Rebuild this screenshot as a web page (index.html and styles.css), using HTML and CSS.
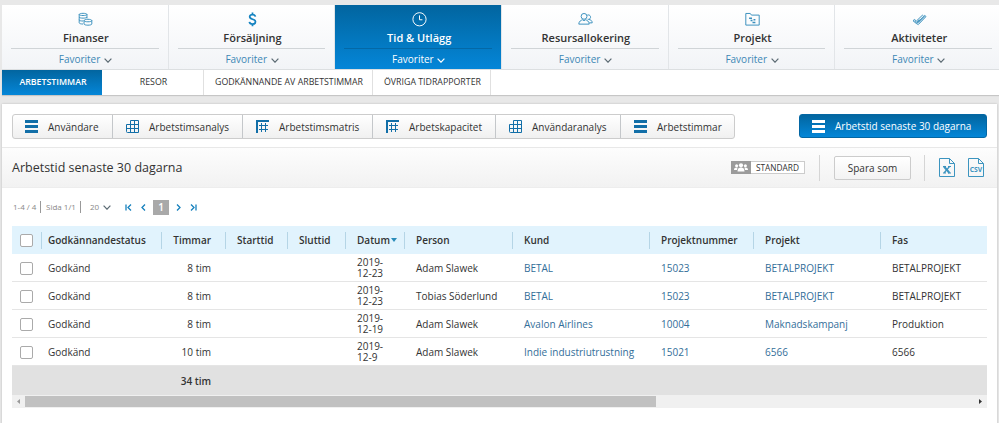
FILE: index.html
```html
<!DOCTYPE html>
<html lang="sv">
<head>
  <meta charset="UTF-8" />
  <meta name="viewport" content="width=device-width, initial-scale=1.0"/>
  <title>Arbetstid senaste 30 dagarna</title>
  <link rel="stylesheet" href="styles.css">
</head>
<body>
  <!-- shared icons -->
  <svg class="sprite" width="0" height="0">
    <symbol id="i-rows" viewBox="0 0 13 13"><path fill="currentColor" d="M0 0h13v3H0zM0 5h13v3H0zM0 10h13v3H0z"/></symbol>
    <symbol id="i-cube" viewBox="0 0 13 13"><path fill="none" stroke="currentColor" d="M4.5 .5h8v12H1.5a1 1 0 0 1-1-1V4.5h12M.5 8.5h12M4.500 .5v12M8.500 .5v12"/></symbol>
    <symbol id="i-matrix" viewBox="0 0 13 13"><path fill="none" stroke="currentColor" stroke-width="2" d="M13 1H1v12"/><path fill="none" stroke="currentColor" d="M5.500 3v9M9.500 3v9M3 5.500h9M3 9.500h9"/></symbol>
    <symbol id="i-down" viewBox="0 0 8 5"><path fill="none" stroke="currentColor" stroke-width="1.200" d="M.6 .6L4 4.200 7.400 .6"/></symbol>
  </svg>

  <nav class="main-nav">
    <a class="module">
      <svg class="module-icon" viewBox="0 0 15 15"><path d="M1 2.500C1 1 9 1 9 2.500S1 4 1 2.500v8.500c0 1 2 1.400 4 1.400M9 2.500v4M1 5.200c0 1.500 8 1.500 8 0M1 8c0 1 2 1.300 4 1.300M6 8.800c0-1.700 8-1.700 8 0s-8 1.700-8 0v3.500c0 1.700 8 1.700 8 0V8.800"/></svg>
      <span class="module-name">Finanser</span>
      <span class="favorites">Favoriter <svg class="down"><use href="#i-down"/></svg></span>
    </a>
    <a class="module">
      <svg class="module-icon dollar" viewBox="0 0 15 15"><path d="M10.500 4.800C10.300 3.400 9.200 2.700 7.500 2.700 5.700 2.700 4.600 3.500 4.600 4.900c0 3.200 6 1.900 6 5.100 0 1.500-1.200 2.400-3.100 2.400-1.800 0-3-.8-3.200-2.300M7.500 .6v2M7.500 12.400v2.200"/></svg>
      <span class="module-name">Försäljning</span>
      <span class="favorites">Favoriter <svg class="down"><use href="#i-down"/></svg></span>
    </a>
    <a class="module active">
      <svg class="module-icon" viewBox="0 0 15 15"><circle cx="7.500" cy="7.500" r="6.800"/><path d="M7.500 3.500v4.500h3"/></svg>
      <span class="module-name">Tid &amp; Utlägg</span>
      <span class="favorites">Favoriter <svg class="down"><use href="#i-down"/></svg></span>
    </a>
    <a class="module">
      <svg class="module-icon" viewBox="0 0 15 15"><circle cx="6" cy="4.500" r="3"/><path d="M.6 12.500C.6 9.500 3 8.500 4.500 8L6 9l1.500-1c1.500.5 3.800 1.500 3.800 4.500zM9.300 3.300a2.300 2.300 0 1 1 1 4.300l-.6-.2M11 7.700c2 .3 3.400 1.300 3.400 3.500h-3"/></svg>
      <span class="module-name">Resursallokering</span>
      <span class="favorites">Favoriter <svg class="down"><use href="#i-down"/></svg></span>
    </a>
    <a class="module">
      <svg class="module-icon" viewBox="0 0 15 15"><path d="M.6 13.500v-12h4.600l1.200 1.700h8v10.300z"/><path stroke-width="1.500" d="M4 6.500h3M5.500 8.700h2M7.500 10.800h3M8.500 8h2"/></svg>
      <span class="module-name">Projekt</span>
      <span class="favorites">Favoriter <svg class="down"><use href="#i-down"/></svg></span>
    </a>
    <a class="module">
      <svg class="module-icon" viewBox="0 0 15 15"><path d="M.8 9l1.500-1.300 2 1.600 6.200-6 1.200 1.100-7.300 7.600zM4.600 11.800l1.600 1.200 8-8.300-1.200-1.100-1.300.8M2.300 9.200l2 1.600 3-3M6.200 11.300L13 4.600"/></svg>
      <span class="module-name">Aktiviteter</span>
      <span class="favorites">Favoriter <svg class="down"><use href="#i-down"/></svg></span>
    </a>
  </nav>

  <div class="sub-nav">
    <a class="tab active">ARBETSTIMMAR</a>
    <a class="tab resor">RESOR</a>
    <a class="tab approve">GODKÄNNANDE AV ARBETSTIMMAR</a>
    <a class="tab other">ÖVRIGA TIDRAPPORTER</a>
  </div>

  <main class="panel">
    <div class="toolbar">
      <div class="views">
        <button class="view w100"><svg class="icon"><use href="#i-rows"/></svg><span>Användare</span></button>
        <button class="view w130"><svg class="icon"><use href="#i-cube"/></svg><span>Arbetstimsanalys</span></button>
        <button class="view w130"><svg class="icon"><use href="#i-matrix"/></svg><span>Arbetstimsmatris</span></button>
        <button class="view w123"><svg class="icon"><use href="#i-matrix"/></svg><span>Arbetskapacitet</span></button>
        <button class="view w125"><svg class="icon"><use href="#i-cube"/></svg><span>Användaranalys</span></button>
        <button class="view w114"><svg class="icon"><use href="#i-rows"/></svg><span>Arbetstimmar</span></button>
      </div>
      <button class="primary"><svg class="icon"><use href="#i-rows"/></svg><span>Arbetstid senaste 30 dagarna</span></button>
    </div>

    <div class="title-bar">
      <h1>Arbetstid senaste 30 dagarna</h1>
      <div class="badge">
        <span class="badge-icon"><svg width="14" height="9" viewBox="0 0 14 9"><g fill="#fff"><circle cx="7" cy="2.300" r="2.100"/><circle cx="2.600" cy="2.700" r="1.500"/><circle cx="11.400" cy="2.700" r="1.500"/><path d="M3.500 8.500C3.500 5.500 5 4.600 7 4.600s3.500.9 3.500 3.900zM0 7C0 5 1 4.300 3.600 4.500L2.900 7zM14 7c0-2-1-2.700-3.600-2.500l.7 2.500z"/></g></svg></span>
        <span class="badge-text">STANDARD</span>
      </div>
      <div class="save-wrap"><button class="save">Spara som</button></div>
      <svg class="file" viewBox="0 0 16 19"><path d="M.5 .5h10l5 5v13H.5zM10.500 .5v5h5"/><path stroke-width="2" d="M5 8.500l5.500 6.500"/><path stroke-width="1.200" d="M10.500 8.500L5 15M4 8.500h3M9 8.500h3M4 15h3M9 15h3"/></svg>
      <svg class="file" viewBox="0 0 16 19"><path d="M.5 18.500V.5h10l5 5v13M10.500 .5v5h5M.5 18.500h15"/><text x="8" y="13.900" textLength="12.500" lengthAdjust="spacingAndGlyphs">CSV</text></svg>
    </div>

    <div class="pager">
      <span class="count">1-4 / 4</span>
      <span class="page">Sida 1/1</span>
      <span class="size">20 <svg class="down"><use href="#i-down"/></svg></span>
      <svg class="arrow first" viewBox="0 0 7 7"><path d="M1 .5v6M6 .5l-3 3 3 3"/></svg>
      <svg class="arrow prev" viewBox="0 0 7 7"><path d="M5 .5l-3 3 3 3"/></svg>
      <span class="current">1</span>
      <svg class="arrow next" viewBox="0 0 7 7"><path d="M2 .5l3 3-3 3"/></svg>
      <svg class="arrow" viewBox="0 0 7 7"><path d="M1 .5l3 3-3 3M6 .5v6"/></svg>
    </div>

    <table class="grid">
      <colgroup>
        <col class="c-check"><col class="c-status"><col class="c-hours"><col class="c-start"><col class="c-end">
        <col class="c-date"><col class="c-person"><col class="c-client"><col class="c-number"><col class="c-project"><col>
      </colgroup>
      <thead>
        <tr>
          <th><i class="check"></i></th>
          <th class="status">Godkännandestatus</th>
          <th class="hours">Timmar</th>
          <th>Starttid</th>
          <th>Sluttid</th>
          <th class="date"><span class="sort">Datum</span></th>
          <th>Person</th>
          <th>Kund</th>
          <th>Projektnummer</th>
          <th>Projekt</th>
          <th>Fas</th>
        </tr>
      </thead>
      <tbody>
        <tr>
          <td><i class="check"></i></td><td class="status">Godkänd</td><td class="hours">8 tim</td><td></td><td></td>
          <td class="date">2019-<br>12-23</td><td>Adam Slawek</td><td><a>BETAL</a></td><td><a>15023</a></td><td><a>BETALPROJEKT</a></td><td>BETALPROJEKT</td>
        </tr>
        <tr>
          <td><i class="check"></i></td><td class="status">Godkänd</td><td class="hours">8 tim</td><td></td><td></td>
          <td class="date">2019-<br>12-23</td><td>Tobias Söderlund</td><td><a>BETAL</a></td><td><a>15023</a></td><td><a>BETALPROJEKT</a></td><td>BETALPROJEKT</td>
        </tr>
        <tr>
          <td><i class="check"></i></td><td class="status">Godkänd</td><td class="hours">8 tim</td><td></td><td></td>
          <td class="date">2019-<br>12-19</td><td>Adam Slawek</td><td><a>Avalon Airlines</a></td><td><a>10004</a></td><td><a>Maknadskampanj</a></td><td>Produktion</td>
        </tr>
        <tr>
          <td><i class="check"></i></td><td class="status">Godkänd</td><td class="hours">10 tim</td><td></td><td></td>
          <td class="date">2019-<br>12-9</td><td>Adam Slawek</td><td><a>Indie industriutrustning</a></td><td><a>15021</a></td><td><a>6566</a></td><td>6566</td>
        </tr>
      </tbody>
      <tfoot>
        <tr><td></td><td></td><td class="hours">34 tim</td><td colspan="8"></td></tr>
      </tfoot>
    </table>
    <div class="scrollbar">
      <svg class="scroll-btn" viewBox="0 0 13 13"><path fill="#999" d="M8 4v5L5 6.500z"/></svg>
      <div class="thumb"></div>
      <svg class="scroll-btn" viewBox="0 0 13 13"><path fill="#333" d="M5 4v5l3-2.500z"/></svg>
    </div>
  </main>
</body>
</html>
```
FILE: styles.css
```css
* {
  box-sizing: border-box;
}
body {
  font-family: 'Open Sans', sans-serif;
  font-size: 10px;
  background: #e8e8e8;
  color: #333;
  margin: 0;
  padding: 5px 0 0 2px;
  height: 423px;
  overflow: hidden;
}
.sprite {
  display: block;
  height: 0;
}
button {
  font: inherit;
  color: inherit;
  padding: 0;
}

/* main navigation */
.main-nav {
  display: flex;
  width: 1000px;
  height: 65px;
  border-bottom: 1px solid #dcdfe1;
}
.module {
  flex: 1;
  display: flex;
  flex-direction: column;
  align-items: center;
  padding: 7px 9px 0;
  background: linear-gradient(#fff, #f2f4f7);
  border-right: 1px solid #e2e5e8;
}
.module.active {
  background: linear-gradient(#02659f, #0486d8);
  color: #fff;
}
.module-icon {
  width: 15px;
  height: 15px;
  fill: none;
  stroke: #3a8fbd;
  stroke-width: 1;
}
.dollar {
  stroke: #1583c0;
  stroke-width: 1.8;
}
.active .module-icon {
  stroke: #fff;
}
.module-name {
  font-size: 11px;
  font-weight: 600;
  line-height: 16px;
  margin-top: 3px;
  height: 19px;
}
.module-icon, .module-name {
  margin-left: 2px;
}
.favorites {
  align-self: stretch;
  text-align: center;
  border-top: 1px solid #d0d4d7;
  color: #3c87b5;
  line-height: 20px;
  padding-left: 1px;
}
.active .favorites {
  color: #fff;
  border-color: #0468a6;
}
.down {
  width: 8px;
  height: 5px;
  margin-left: 1px;
  color: #5b6a73;
}
.active .down {
  color: #fff;
}

/* tabs under the active module */
.sub-nav {
  display: flex;
  width: 1000px;
  height: 25px;
  background: #fff;
  box-shadow: 0 1px 1px #c6c6c6;
  font-size: 8.800px;
}
.tab {
  border-right: 1px solid #e0e0e0;
  text-align: center;
  line-height: 24px;
  width: 100px;
  padding-left: 2px;
}
.tab.active {
  background: linear-gradient(#02659f, #0486d8);
  color: #fff;
  font-weight: 600;
  border: 0;
}
.resor {
  width: 102px;
}
.approve {
  width: 169px;
}
.other {
  width: 118px;
}

/* page panel */
.panel {
  width: 995px;
  height: 330px;
  margin-top: 9px;
  background: #fff;
  box-shadow: 0 0 2px #bbb;
}
.toolbar {
  display: flex;
  justify-content: space-between;
  padding: 10px 10px 9px;
  height: 44px;
  border-bottom: 1px solid #e8e8e8;
}
.views {
  display: flex;
  height: 25px;
  border: 1px solid #ccc;
  border-radius: 3px;
  background: linear-gradient(#fff, #f0f0f0);
}
.view {
  display: flex;
  align-items: center;
  gap: 10px;
  padding-left: 13px;
  background: none;
  border: 0;
  border-left: 1px solid #c4c7ca;
  white-space: nowrap;
}
.view:first-child {
  border-left: 0;
  padding-left: 12px;
}
.w100 { width: 99px; }
.w130 { width: 130px; }
.w123 { width: 123px; }
.w125 { width: 125px; }
.w114 { width: 114px; }
.icon {
  width: 13px;
  height: 13px;
  color: #126fa8;
  flex: none;
}
.primary {
  display: flex;
  align-items: center;
  gap: 10px;
  width: 188px;
  height: 24px;
  padding-left: 12px;
  border: 1px solid #0467a4;
  border-radius: 3px;
  background: linear-gradient(#02659f, #0486d8);
  color: #fff;
  white-space: nowrap;
}
.primary .icon {
  color: #fff;
}

.title-bar {
  display: flex;
  align-items: center;
  height: 40px;
  padding: 0 13px 0 10px;
  background: linear-gradient(#fdfdfd, #f2f2f2);
  border-bottom: 1px solid #ededed;
}
h1 {
  font-size: 12.500px;
  font-weight: 400;
  margin: 0 auto 0 0;
}
.badge {
  display: flex;
  height: 13px;
  border: 1px solid #ccc;
  background: #fff;
  font-size: 8.300px;
  line-height: 12px;
}
.badge-icon {
  display: flex;
  align-items: center;
  justify-content: center;
  width: 20px;
  margin: -1px 0 -1px -1px;
  background: #9b9b9b;
}
.badge-text {
  width: 53px;
  text-align: center;
}
.save-wrap {
  padding: 1px 13px 1px 14px;
  margin: 0 14px;
  border-left: 1px solid #d5d5d5;
  border-right: 1px solid #d5d5d5;
}
.save {
  display: block;
  width: 77px;
  height: 24px;
  border: 1px solid #ccc;
  border-radius: 2px;
  background: linear-gradient(#fff, #f3f3f3);
}
.file {
  width: 16px;
  height: 19px;
  fill: none;
  stroke: #3c94bf;
}
.file + .file {
  margin-left: 13px;
}
.file text {
  font-size: 6.500px;
  font-weight: 700;
  text-anchor: middle;
  fill: #3c94bf;
  stroke: none;
}

.pager {
  display: flex;
  align-items: center;
  height: 38px;
  padding: 0 11px;
  font-size: 8px;
  line-height: 12px;
  color: #888;
}
.count, .page {
  border-right: 1px solid #999;
}
.count {
  width: 28px;
}
.page {
  width: 40px;
  padding-left: 5px;
}
.size {
  width: 44px;
  padding-left: 9px;
}
.size .down {
  margin-left: 2px;
}
.arrow {
  width: 7px;
  height: 7px;
  fill: none;
  stroke: #1781bd;
  stroke-width: 1.300;
}
.prev {
  margin: 0 6px 0 8px;
}
.current {
  width: 16px;
  height: 15px;
  background: #a9a9a9;
  color: #fff;
  font-size: 10px;
  font-weight: 600;
  line-height: 15px;
  text-align: center;
}
.next {
  margin: 0 8px 0 6px;
}

/* time entries */
.grid {
  width: 975px;
  margin-left: 10px;
  table-layout: fixed;
  border-collapse: separate;
  border-spacing: 0;
  font-size: 10px;
}
.c-check { width: 29px; }
.c-status { width: 120px; }
.c-hours { width: 64px; }
.c-start { width: 62px; }
.c-end { width: 58px; }
.c-date { width: 59px; }
.c-person { width: 108px; }
.c-client { width: 137px; }
.c-number { width: 104px; }
.c-project { width: 127px; }
.grid th, .grid td {
  height: 28px;
  padding: 1px 0 0 12px;
  text-align: left;
  white-space: nowrap;
  line-height: 11px;
}
.grid th {
  font-weight: 600;
  background: linear-gradient(#b5d5e6, #b5d5e6) no-repeat 0 6px / 1px 17px #e1f3fd;
}
.grid th:first-child {
  background: #e1f3fd;
}
.grid th:first-child, .grid td:first-child {
  padding-left: 8px;
}
.grid .status {
  padding-left: 7px;
}
.grid .hours {
  text-align: right;
  padding: 1px 14px 0 0;
}
.grid tbody td {
  border-bottom: 1px solid #e5e5e5;
}
.grid a {
  color: #336e99;
}
.grid tfoot td {
  height: 29px;
  background: #e1e1e1;
  font-weight: 600;
}
.check {
  display: block;
  width: 13px;
  height: 13px;
  border: 1px solid #aaa;
  border-radius: 2px;
  background: #fff;
}
.sort::after {
  content: '';
  display: inline-block;
  margin-left: 1px;
  vertical-align: 2px;
  border: 3px solid transparent;
  border-top: 4px solid #2a8cba;
  border-bottom: 0;
}
.scrollbar {
  display: flex;
  align-items: center;
  width: 975px;
  height: 13px;
  margin-left: 10px;
  background: #f0f0f0;
}
.scroll-btn {
  width: 13px;
  height: 13px;
}
.thumb {
  width: 631px;
  height: 11px;
  margin-right: auto;
  background: #c1c1c1;
}
```
